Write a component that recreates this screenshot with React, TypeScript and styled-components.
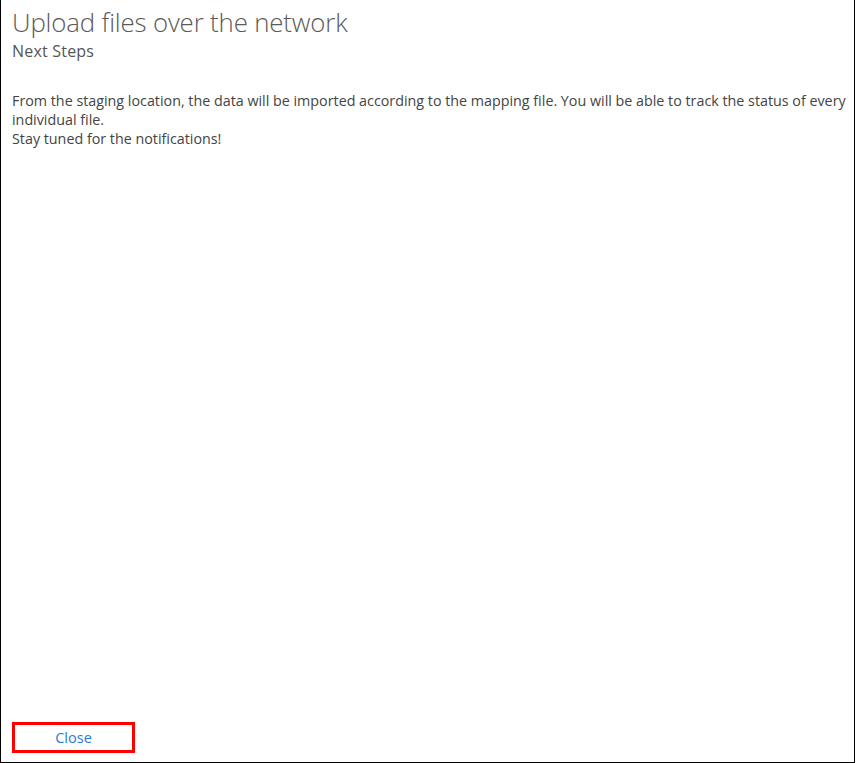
import React from "react";
import styled, { createGlobalStyle } from "styled-components";

const Global = createGlobalStyle`
  html, body { margin: 0; padding: 0; background: #fff; }
  body { width: 856px; height: 763px; overflow: hidden; }
  #root { height: 100%; }
`;

const Frame = styled.div`
  box-sizing: border-box;
  width: 855px;
  height: 763px;
  border-left: 1px solid #000;
  border-right: 1px solid #000;
  border-bottom: 1px solid #000;
  display: flex;
  flex-direction: column;
  padding: 0 2px 9px 11px;
  font-family: "Open Sans", "Segoe UI", sans-serif;
`;

const Title = styled.h1`
  margin: 6px 0 0;
  font-size: 25.8px;
  font-weight: 300;
  line-height: 32px;
  color: #5a5a5a;
  letter-spacing: -0.15px;
`;

const Subtitle = styled.h2`
  margin: 2px 0 0;
  font-size: 16px;
  font-weight: 400;
  line-height: 22px;
  color: #555;
  letter-spacing: 0.2px;
`;

const Body = styled.div`
  margin-top: 29px;
  flex: 1;
  font-size: 14.3px;
  line-height: 19px;
  color: #444;
`;

const Para = styled.p`
  margin: 0;
`;

const Footer = styled.div`
  display: flex;
`;

const CloseButton = styled.button`
  box-sizing: border-box;
  width: 123px;
  height: 31px;
  border: 3px solid #f00;
  background: #fff;
  color: #2b7cd3;
  font-family: inherit;
  font-size: 14.5px;
  padding: 0;
  cursor: pointer;
`;

export default function App() {
  return (
    <>
      <Global />
      <Frame>
        <Title>Upload files over the network</Title>
        <Subtitle>Next Steps</Subtitle>
        <Body>
          <Para>
            From the staging location, the data will be imported according to the mapping file. You will be able to track the status of every individual file.
          </Para>
          <Para>Stay tuned for the notifications!</Para>
        </Body>
        <Footer>
          <CloseButton>Close</CloseButton>
        </Footer>
      </Frame>
    </>
  );
}
